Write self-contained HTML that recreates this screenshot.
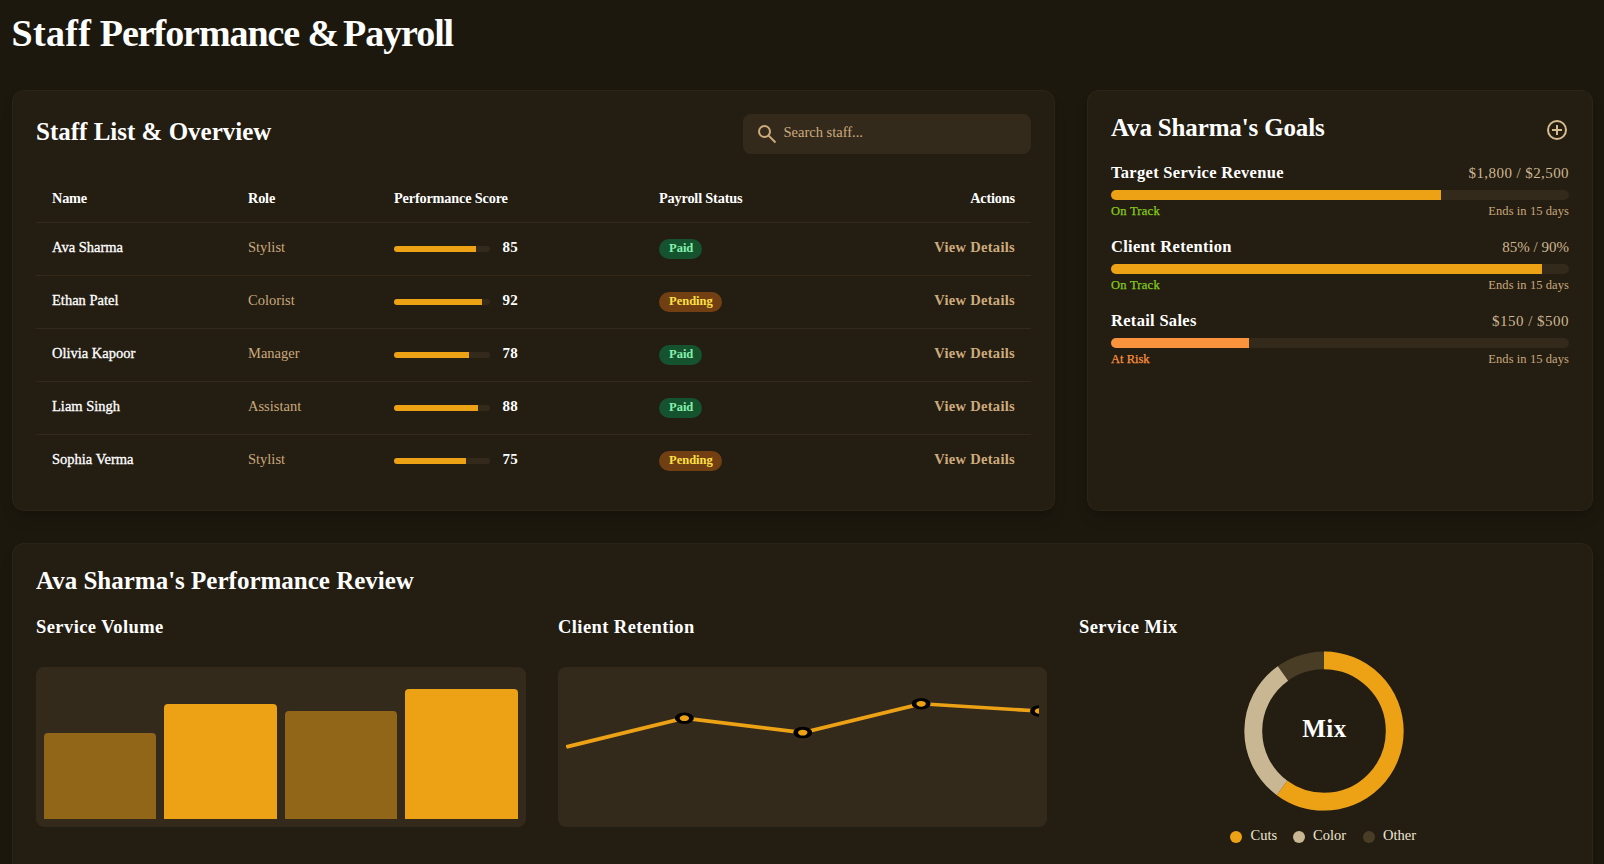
<!DOCTYPE html>
<html lang="en">
<head>
<meta charset="utf-8">
<title>Staff Performance &amp; Payroll</title>
<style>
*{box-sizing:border-box;margin:0;padding:0}
html,body{width:1604px;height:864px;overflow:hidden}
body{background:#1c180e;color:#fff;font-family:"Liberation Serif","DejaVu Serif",serif;position:relative;-webkit-font-smoothing:antialiased}
.abs{position:absolute}
h1{position:absolute;left:11.5px;top:12.8px;font-size:38px;line-height:40px;font-weight:700;white-space:nowrap;letter-spacing:-1.06px}
.card{position:absolute;background:#241d12;border-radius:12px;box-shadow:inset 0 0 0 1px rgba(255,240,200,.04),0 10px 15px -3px rgba(0,0,0,.14),0 4px 6px -3px rgba(0,0,0,.14)}
#cardA{left:12px;top:90px;width:1043px;height:421px}
#cardB{left:1087px;top:90px;width:505.5px;height:421px}
#cardC{left:12px;top:543px;width:1580.5px;height:340px}
h2{position:absolute;font-size:25px;line-height:32px;font-weight:700;white-space:nowrap}
h3{position:absolute;font-size:18.5px;line-height:28px;font-weight:700;white-space:nowrap;letter-spacing:.42px}
/* search */
.search{position:absolute;left:731px;top:24px;width:288px;height:40px;border-radius:8px;background:#342a1c;color:#cdab7c}
.search svg{position:absolute;left:12px;top:8px;width:24px;height:24px}
.search span{position:absolute;left:40.5px;top:8px;font-size:14.5px;line-height:20px;white-space:nowrap}
/* table */
table{position:absolute;left:24px;top:87px;width:995px;border-collapse:collapse;table-layout:fixed}
th,td{text-align:left;padding:0 16px;font-size:14.5px;line-height:20px;white-space:nowrap;vertical-align:top}
th{height:45px;padding-top:11px;font-weight:700;font-size:14.3px;letter-spacing:-.18px;border-bottom:1px solid #342a1c}
td{height:53px;padding-top:14.2px;border-bottom:1px solid #342a1c}
tr:last-child td{border-bottom:0;height:52px}
td.nm{color:#fff;-webkit-text-stroke:.3px #fff}
td.rl{color:#c9a97c}
th.r,td.r{text-align:right}
td.r{font-weight:700;color:#cdab7c;letter-spacing:.3px}
.sc{display:flex;align-items:center;height:20px}
.trk{width:96px;height:6px;border-radius:3px;background:#342a1c;overflow:hidden;margin-top:4.5px}
.trk i{display:block;height:6px;background:#eda216}
.sc b{margin-left:12.5px;font-weight:700;font-size:15px;letter-spacing:.35px}
.bdg{display:inline-block;margin-top:2.5px;height:20px;border-radius:10px;padding:0 10px;font-size:12.5px;line-height:18.2px;font-weight:700;vertical-align:top}
.paid{background:#14532d;color:#86efac;width:43px}
.pend{background:#713f12;color:#fde047;width:63px}
/* goals */
.plus{position:absolute;left:458px;top:28px;width:24px;height:24px;color:#d6bb8e}
.goal{position:absolute;left:24px;width:458px;height:58px}
.goal .t{position:absolute;left:0;top:-1px;font-size:16.5px;line-height:24px;font-weight:700;white-space:nowrap;letter-spacing:.3px}
.goal .v{position:absolute;right:0;top:.8px;font-size:15px;line-height:20px;color:#cdb690;white-space:nowrap}
.goal .bar{position:absolute;left:0;top:28px;width:458px;height:10px;border-radius:5px;background:#342a1c;overflow:hidden}
.goal .bar i{display:block;height:10px;background:#eda216}
.goal .s{-webkit-text-stroke:.25px currentColor;position:absolute;left:0;top:41px;font-size:12.5px;line-height:16px;white-space:nowrap;font-weight:400}
.goal .e{position:absolute;right:0;top:41px;letter-spacing:.08px;font-size:12.5px;line-height:16px;color:#c9a97c;white-space:nowrap}
.ok{color:#84cc16}.risk{color:#fb923c}
/* review */
.box{position:absolute;top:124px;width:489.5px;height:160px;border-radius:8px;background:#342a1c}
.bars i{position:absolute;bottom:8px;width:112.5px;border-radius:4px 4px 0 0;background:#eda216}
.bars i.d{background:rgba(237,162,22,.5)}
.box svg{position:absolute;left:8px;top:8px;width:473.5px;height:144px;overflow:hidden}
.donut{position:absolute;left:1232px;top:108px;width:160px;height:160px}
.mix{position:absolute;left:1232.5px;top:170px;width:160px;text-align:center;letter-spacing:.5px;font-size:25px;line-height:32px;font-weight:700}
.lg{position:absolute;top:282px;font-size:14.5px;line-height:20px;color:#efe6d4;white-space:nowrap;padding-left:20px}
.lg:before{content:"";position:absolute;left:0;top:5.5px;width:12px;height:12px;border-radius:6px;background:var(--c)}
</style>
</head>
<body>
<h1><span style="letter-spacing:.35px">Staff</span> Performance <span style="margin-right:-3.6px">&amp;</span> Payroll</h1>

<section class="card" id="cardA">
  <h2 style="left:24px;top:26px">Staff List &amp; Overview</h2>
  <div class="search">
    <svg viewBox="0 0 24 24" fill="none" stroke="currentColor" stroke-width="2" stroke-linecap="butt"><circle cx="9.5" cy="9.5" r="5.5"/><path d="M13.6 13.6 20.5 20.5"/></svg>
    <span>Search staff...</span>
  </div>
  <table>
    <colgroup><col style="width:196px"><col style="width:146px"><col style="width:265px"><col style="width:190px"><col></colgroup>
    <thead><tr><th>Name</th><th>Role</th><th>Performance Score</th><th>Payroll Status</th><th class="r">Actions</th></tr></thead>
    <tbody>
      <tr><td class="nm">Ava Sharma</td><td class="rl">Stylist</td><td><div class="sc"><span class="trk"><i style="width:85%"></i></span><b>85</b></div></td><td><span class="bdg paid">Paid</span></td><td class="r">View Details</td></tr>
      <tr><td class="nm">Ethan Patel</td><td class="rl">Colorist</td><td><div class="sc"><span class="trk"><i style="width:92%"></i></span><b>92</b></div></td><td><span class="bdg pend">Pending</span></td><td class="r">View Details</td></tr>
      <tr><td class="nm">Olivia Kapoor</td><td class="rl">Manager</td><td><div class="sc"><span class="trk"><i style="width:78%"></i></span><b>78</b></div></td><td><span class="bdg paid">Paid</span></td><td class="r">View Details</td></tr>
      <tr><td class="nm">Liam Singh</td><td class="rl">Assistant</td><td><div class="sc"><span class="trk"><i style="width:88%"></i></span><b>88</b></div></td><td><span class="bdg paid">Paid</span></td><td class="r">View Details</td></tr>
      <tr><td class="nm">Sophia Verma</td><td class="rl">Stylist</td><td><div class="sc"><span class="trk"><i style="width:75%"></i></span><b>75</b></div></td><td><span class="bdg pend">Pending</span></td><td class="r">View Details</td></tr>
    </tbody>
  </table>
</section>

<section class="card" id="cardB">
  <h2 style="left:24px;top:22px;letter-spacing:-.15px">Ava Sharma's Goals</h2>
  <svg class="plus" viewBox="0 0 24 24" fill="none" stroke="currentColor" stroke-width="2"><circle cx="12" cy="12" r="9"/><path d="M12 7v10M7 12h10"/></svg>
  <div class="goal" style="top:72px">
    <div class="t">Target Service Revenue</div><div class="v" style="letter-spacing:.42px">$1,800 / $2,500</div>
    <div class="bar"><i style="width:72%"></i></div>
    <div class="s ok" style="letter-spacing:.25px">On Track</div><div class="e">Ends in 15 days</div>
  </div>
  <div class="goal" style="top:146px">
    <div class="t">Client Retention</div><div class="v">85% / 90%</div>
    <div class="bar"><i style="width:94.1%"></i></div>
    <div class="s ok" style="letter-spacing:.25px">On Track</div><div class="e">Ends in 15 days</div>
  </div>
  <div class="goal" style="top:220px">
    <div class="t">Retail Sales</div><div class="v" style="letter-spacing:.48px">$150 / $500</div>
    <div class="bar"><i style="width:30.2%;background:#fb923c"></i></div>
    <div class="s risk">At Risk</div><div class="e">Ends in 15 days</div>
  </div>
</section>
<section class="card" id="cardC">
  <h2 style="left:24px;top:22px">Ava Sharma's Performance Review</h2>
  <h3 style="left:24px;top:70px">Service Volume</h3>
  <h3 style="left:546px;top:70px">Client Retention</h3>
  <h3 style="left:1067px;top:70px">Service Mix</h3>
  <div class="box bars" style="left:24px">
    <i class="d" style="left:8px;height:86.4px;width:112px"></i>
    <i style="left:128.4px;height:115.2px"></i>
    <i class="d" style="left:248.8px;height:108px"></i>
    <i style="left:369.2px;height:129.6px"></i>
  </div>
  <div class="box" style="left:545.5px">
    <svg viewBox="0 0 100 50" preserveAspectRatio="none">
      <polyline points="0,25 25,15 50,20 75,10 100,12.5" fill="none" stroke="#eda216" stroke-width="1.25"/>
      <g fill="#eda216" stroke="#000" stroke-width="1"><circle cx="25" cy="15" r="1.5"/><circle cx="50" cy="20" r="1.5"/><circle cx="75" cy="10" r="1.5"/><circle cx="100" cy="12.5" r="1.5"/></g>
    </svg>
  </div>
  <svg class="donut" viewBox="0 0 36 36" fill="none" stroke-width="4">
    <circle cx="18" cy="18" r="15.9155" stroke="#493d26"/>
    <circle cx="18" cy="18" r="15.9155" stroke="#c9b794" stroke-dasharray="30 70" stroke-dashoffset="-60" transform="rotate(-90 18 18)"/>
    <circle cx="18" cy="18" r="15.9155" stroke="#eda216" stroke-dasharray="60 40" transform="rotate(-90 18 18)"/>
  </svg>
  <div class="mix">Mix</div>
  <span class="lg" style="left:1217.5px;--c:#eda216;padding-left:21px">Cuts</span>
  <span class="lg" style="left:1281px;--c:#c9b794">Color</span>
  <span class="lg" style="left:1351px;--c:#493d26">Other</span>
</section>
</body>
</html>
